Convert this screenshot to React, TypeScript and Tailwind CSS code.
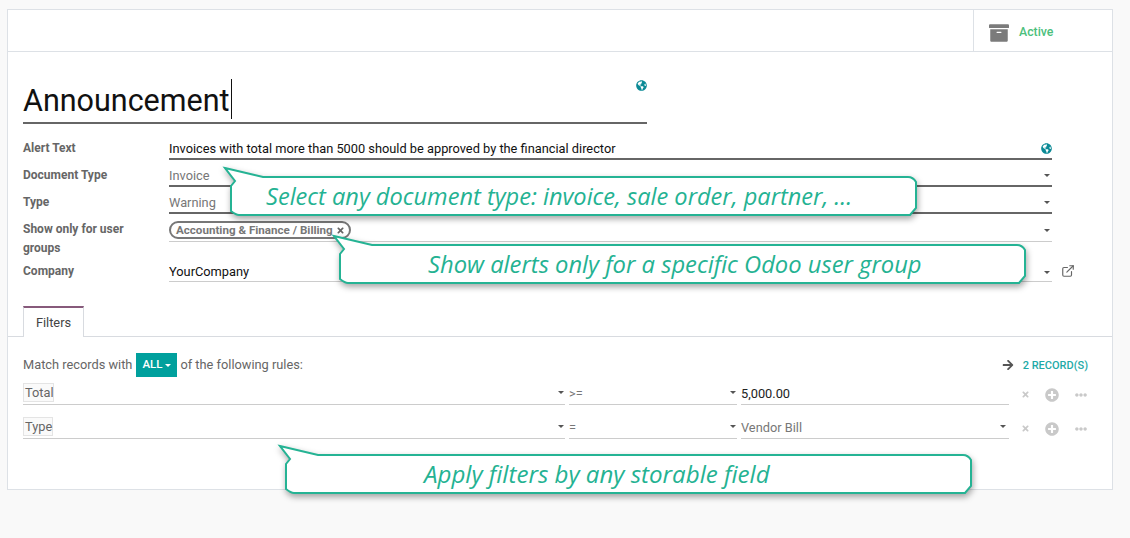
import { FaArchive, FaGlobeAmericas, FaArrowRight, FaPlusCircle, FaTimes, FaEllipsisH } from "react-icons/fa";
import { ExternalLink } from "lucide-react";

const Caret = ({ className = "" }: { className?: string }) => (
  <span className={`inline-block w-0 h-0 border-x-[3px] border-x-transparent border-t-[3px] border-t-[#555] ${className}`} />
);

function Bubble({ className, text, textClass }: { className: string; text: string; textClass: string }) {
  return (
    <div className={`absolute w-[696px] h-[52px] ${className}`}>
      <svg width="696" height="52" className="absolute left-0 top-0 overflow-visible drop-shadow-[1px_3px_3px_rgba(0,0,0,0.35)]">
        <path
          d="M1 1 L39 10 L684 10 Q689 10 692 15 L692 41 L686 48 L15 48 Q12 48 7 44 L7 19 L11 14 Z"
          fill="#ffffff"
          stroke="#25b394"
          strokeWidth="2"
          strokeLinejoin="miter"
        />
      </svg>
      <span className={`absolute top-[11px] h-[36px] leading-[36px] italic text-[#24b292] whitespace-nowrap font-['Open_Sans','Noto_Sans',sans-serif] ${textClass}`}>
        {text}
      </span>
    </div>
  );
}

function Row({ label, h, line, children, labelClass = "" }: { label: string; h: string; line: string; children: React.ReactNode; labelClass?: string }) {
  return (
    <div className={`flex ${h}`}>
      <div className={`w-[146px] shrink-0 pr-[16px] text-[12px] leading-[19px] font-bold text-[#666] ${labelClass}`}>{label}</div>
      <div className={`w-[883px] flex items-end ${line}`}>{children}</div>
    </div>
  );
}

function RuleRow({ field, fieldClass, op, value, valueClass, caret, h }: { field: string; fieldClass: string; op: string; value: string; valueClass: string; caret: boolean; h: string }) {
  return (
    <div className={`flex items-end ${h}`}>
      <div className="w-[542px] h-full flex items-center justify-between border-b border-[#ccc] pr-[1px]">
        <span className={`border border-[#e4e4e4] bg-[#fafafa] h-[19px] leading-[18px] text-[12.8px] text-[#666] ${fieldClass}`}>{field}</span>
        <Caret />
      </div>
      <div className="w-[168px] h-full ml-[4px] flex items-center justify-between border-b border-[#ccc] pr-[1px] text-[12.8px] text-[#777]">
        <span className="pt-[2px]">{op}</span>
        <Caret />
      </div>
      <div className={`w-[268px] h-full ml-[4px] flex items-center justify-between border-b border-[#ccc] pr-[3px] text-[12.8px] ${valueClass}`}>
        <span className="pt-[3px]">{value}</span>
        {caret && <Caret />}
      </div>
      <div className="h-full flex items-center text-[#c9c9c9] pt-[3px]">
        <FaTimes className="ml-[12px] w-[9px] h-[9px]" />
        <FaPlusCircle className="ml-[15px] w-[14px] h-[14px]" />
        <FaEllipsisH className="ml-[15px] w-[14px] h-[12px]" />
      </div>
    </div>
  );
}

export default function App() {
  return (
    <div className="relative w-[1130px] h-[538px] overflow-hidden bg-[#f9f9f9] pt-[9px] pl-[7px] font-['Roboto',sans-serif] text-[12.8px] text-[#222]">
      <div className="w-[1106px] h-[481px] bg-white border border-[#dde1e6]">
        <div className="h-[42px] flex justify-end border-b border-[#dde1e6]">
          <div className="w-[139px] border-l border-[#dde1e6] flex items-center pl-[15px] pt-[4px]">
            <FaArchive className="w-[20px] h-[20px] text-[#7b7b7b]" />
            <span className="ml-[10px] text-[12.3px] font-medium text-[#4bc07c]">Active</span>
          </div>
        </div>

        <div className="pl-[15px]">
          <div className="w-[624px] h-[72px] border-b-2 border-[#666] flex justify-between">
            <div className="flex items-center h-[70px] pt-[28px]">
              <span className="text-[30.5px] leading-[40px] text-[#111]">Announcement</span>
              <span className="w-px h-[40px] bg-[#111] ml-px -mt-[4px]" />
            </div>
            <FaGlobeAmericas className="w-[11px] h-[11px] mt-[28px] text-[#0b8a96]" />
          </div>

          <Row label="Alert Text" h="h-[36px]" line="border-b-2 border-[#666] justify-between" labelClass="pt-[15px]">
            <span className="text-[#111]">Invoices with total more than 5000 should be approved by the financial director</span>
            <FaGlobeAmericas className="w-[11px] h-[11px] mb-[4px] text-[#0b8a96]" />
          </Row>
          <Row label="Document Type" h="h-[27px]" line="border-b-2 border-[#666] justify-between" labelClass="pt-[6px]">
            <span className="text-[#777]">Invoice</span>
            <Caret className="mr-[2px] mb-[8px]" />
          </Row>
          <Row label="Type" h="h-[27px]" line="border-b-2 border-[#666] justify-between" labelClass="pt-[6px]">
            <span className="text-[#777]">Warning</span>
            <Caret className="mr-[2px] mb-[8px]" />
          </Row>
          <Row label="Show only for user groups" h="h-[28px]" line="border-b border-[#ccc] justify-between pb-[2px]" labelClass="pt-[6px]">
            <span className="h-[18px] pl-[5px] pr-[4px] border-2 border-[#777] rounded-full text-[11.6px] leading-[14px] font-bold text-[#777] flex items-center gap-[3px]">
              Accounting &amp; Finance / Billing
              <FaTimes className="w-[9px] h-[9px] text-[#666]" />
            </span>
            <Caret className="mr-[2px] mb-[7px]" />
          </Row>
          <div className="flex h-[40px]">
            <div className="w-[146px] shrink-0 text-[12px] leading-[19px] font-bold text-[#666] pt-[20px]">Company</div>
            <div className="w-[883px] flex items-end justify-between border-b border-[#ccc]">
              <span className="text-[#111]">YourCompany</span>
              <Caret className="mr-[2px] mb-[7px]" />
            </div>
            <ExternalLink className="w-[14px] h-[14px] ml-[9px] mt-[22px] text-[#666]" strokeWidth={2} />
          </div>
        </div>

        <div className="mt-[24px] h-[31px] border-b border-[#d8dbe0] pl-[15px]">
          <div className="w-[61px] h-[31px] bg-white border-x border-[#d8dbe0] border-t-2 border-t-[#875a7b] flex items-center justify-center text-[#444]">Filters</div>
        </div>

        <div className="pl-[15px] pr-[23px]">
          <div className="h-[44px] pt-[12px] flex items-center justify-between">
            <div className="flex items-center text-[#666]">
              <span>Match records with</span>
              <span className="ml-[4px] w-[41px] h-[24px] bg-[#00a09d] text-white text-[11.5px] font-medium flex items-center justify-center gap-[3px]">
                ALL <Caret className="border-t-white" />
              </span>
              <span className="ml-[3px]">of the following rules:</span>
            </div>
            <div className="flex items-center">
              <FaArrowRight className="w-[12px] h-[12px] text-[#555]" />
              <span className="ml-[9px] mr-[1px] pt-[3px] text-[11px] font-medium text-[#1eaaa7]">2 RECORD(S)</span>
            </div>
          </div>
          <RuleRow h="h-[24px]" field="Total" fieldClass="w-[31px] pl-[1px]" op=">=" value="5,000.00" valueClass="text-[#222]" caret={false} />
          <RuleRow h="h-[24px] mt-[10px]" field="Type" fieldClass="w-[30px] pl-[1px]" op="=" value="Vendor Bill" valueClass="text-[#777]" caret />
        </div>
      </div>

      <Bubble className="left-[224px] top-[167px]" text="Select any document type: invoice, sale order, partner, ..." textClass="left-[42px] text-[23.6px]" />
      <Bubble className="left-[333px] top-[235px]" text="Show alerts only for a specific Odoo user group" textClass="left-[95px] text-[23.76px]" />
      <Bubble className="left-[279px] top-[445px]" text="Apply filters by any storable field" textClass="left-[145px] text-[24.1px]" />
    </div>
  );
}
